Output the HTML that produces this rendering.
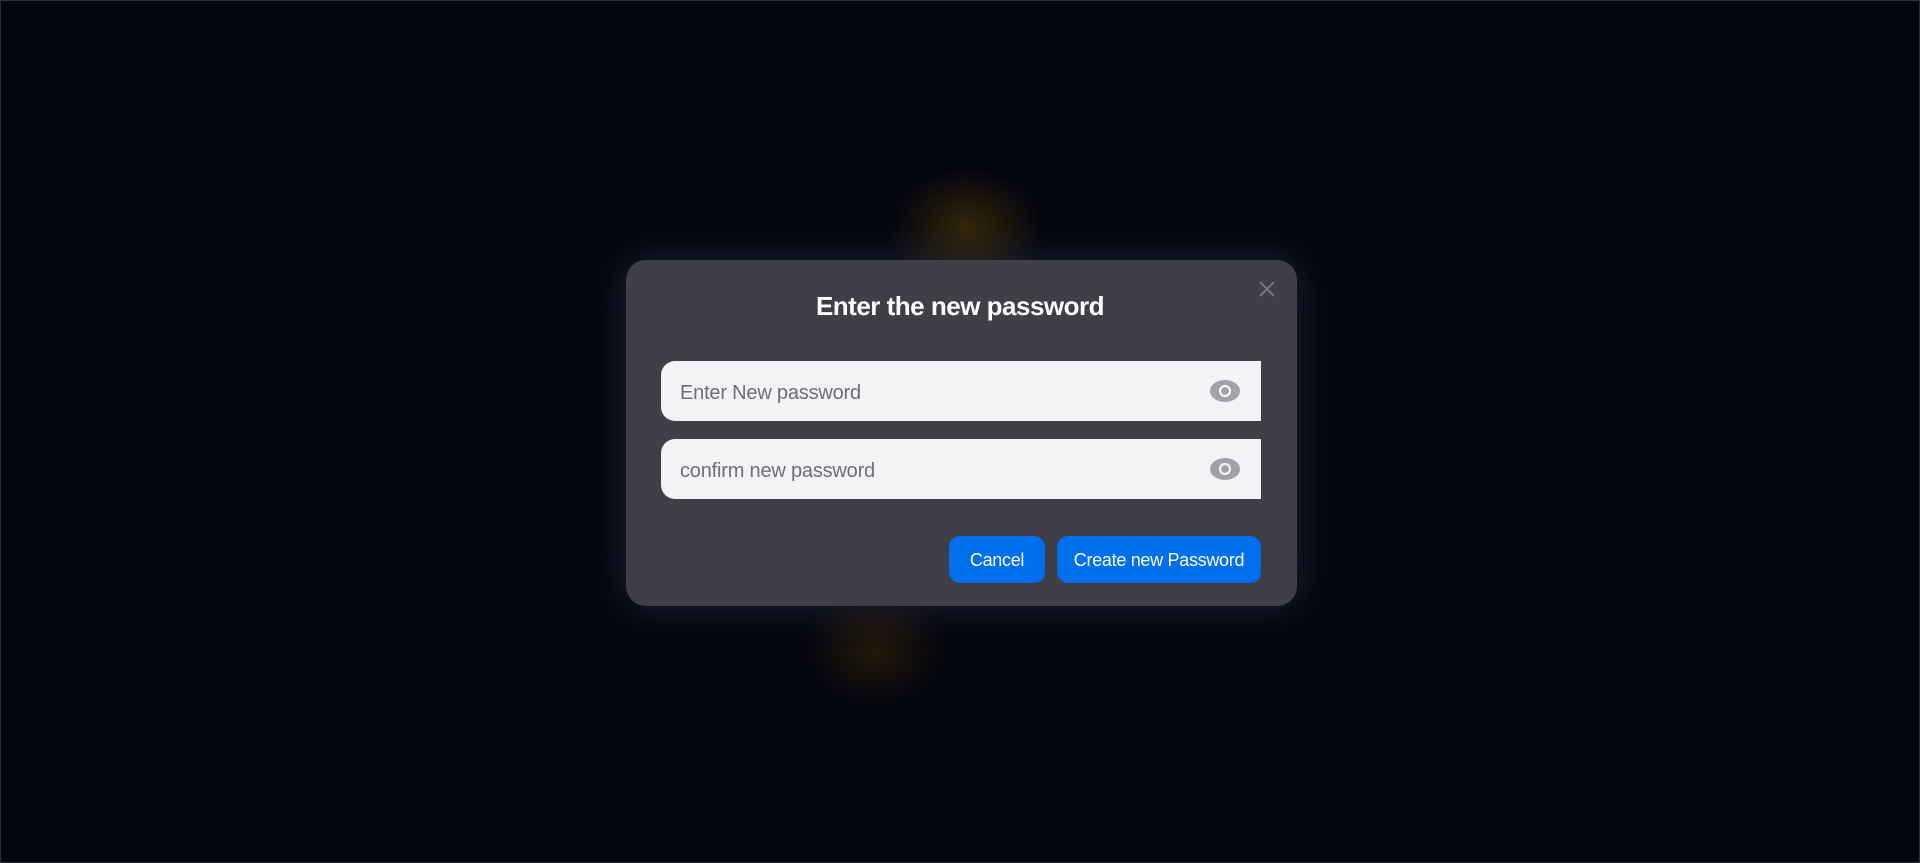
<!DOCTYPE html>
<html><head><meta charset="utf-8"><style>
html,body{margin:0;padding:0;width:1920px;height:863px;overflow:hidden;background:#02040f;font-family:"Liberation Sans",sans-serif;}
.frame{position:absolute;left:0;top:0;width:1918px;height:861px;border:1px solid #2a2a30;border-top-color:#333;}
.glow{position:absolute;border-radius:50%;}
.modal{position:absolute;left:626px;top:260px;width:671px;height:346px;background:#3f3f47;border-radius:20px;box-shadow:0 0 40px 6px rgba(200,200,230,0.13);}
.title{position:absolute;left:0;right:0;top:291px;text-align:center;color:#fff;font-size:26px;font-weight:bold;letter-spacing:-0.5px;}
.close{position:absolute;left:1259px;top:281px;}
.inp{position:absolute;left:661px;width:600px;height:60px;background:#f3f3f5;border-radius:14px 0 0 14px;}
.inp span{position:absolute;left:19px;top:21px;font-size:20px;color:#6e6e76;letter-spacing:-0.2px;}
.inp svg{position:absolute;left:549px;top:19px;}
.btn{position:absolute;top:536px;height:47px;background:#006fee;border-radius:11px;color:#fff;font-size:18px;line-height:49px;text-align:center;letter-spacing:-0.3px;}
</style></head><body>
<div class="frame"></div>
<div class="glow" style="left:887px;top:166px;width:160px;height:120px;background:radial-gradient(ellipse at center,rgba(110,80,0,0.45) 0%,rgba(110,80,0,0.15) 45%,rgba(110,80,0,0) 70%);"></div>
<div class="glow" style="left:800px;top:590px;width:150px;height:120px;background:radial-gradient(ellipse at center,rgba(100,65,0,0.35) 0%,rgba(100,65,0,0.12) 45%,rgba(100,65,0,0) 70%);"></div>
<div class="modal"></div>
<div class="title">Enter the new password</div>
<svg class="close" width="16" height="16" viewBox="0 0 16 16"><path d="M1 1L15 15M15 1L1 15" stroke="#7b7b84" stroke-width="1.8"/></svg>
<div class="inp" style="top:361px"><span>Enter New password</span>
<svg width="30" height="22" viewBox="0 0 30 22"><ellipse cx="15" cy="11" rx="15" ry="11" fill="#a1a1aa"/><circle cx="15" cy="11" r="5" fill="none" stroke="#f3f3f5" stroke-width="2.2"/></svg></div>
<div class="inp" style="top:439px"><span>confirm new password</span>
<svg width="30" height="22" viewBox="0 0 30 22"><ellipse cx="15" cy="11" rx="15" ry="11" fill="#a1a1aa"/><circle cx="15" cy="11" r="5" fill="none" stroke="#f3f3f5" stroke-width="2.2"/></svg></div>
<div class="btn" style="left:949px;width:96px;">Cancel</div>
<div class="btn" style="left:1057px;width:204px;">Create new Password</div>
</body></html>
